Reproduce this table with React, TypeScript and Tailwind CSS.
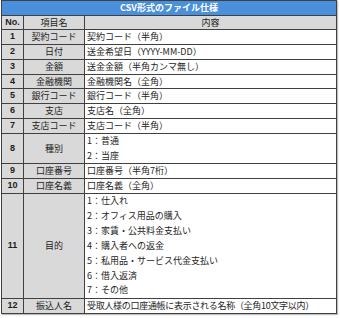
// CSV file spec table, Excel-style grid with a blue title bar and gray key columns.
type Row = { no: string; name: string; lines: string[]; tight?: boolean }

const ROWS: Row[] = [
  { no: '1', name: '契約コード', lines: ['契約コード（半角）'] },
  { no: '2', name: '日付', lines: ['送金希望日（YYYY-MM-DD）'] },
  { no: '3', name: '金額', lines: ['送金金額（半角カンマ無し）'] },
  { no: '4', name: '金融機関', lines: ['金融機関名（全角）'] },
  { no: '5', name: '銀行コード', lines: ['銀行コード（半角）'] },
  { no: '6', name: '支店', lines: ['支店名（全角）'] },
  { no: '7', name: '支店コード', lines: ['支店コード（半角）'] },
  { no: '8', name: '種別', lines: ['1：普通', '2：当座'] },
  { no: '9', name: '口座番号', lines: ['口座番号（半角7桁）'] },
  { no: '10', name: '口座名義', lines: ['口座名義（全角）'] },
  {
    no: '11',
    name: '目的',
    lines: [
      '1：仕入れ',
      '2：オフィス用品の購入',
      '3：家賃・公共料金支払い',
      '4：購入者への返金',
      '5：私用品・サービス代金支払い',
      '6：借入返済',
      '7：その他',
    ],
  },
  { no: '12', name: '振込人名', lines: ['受取人様の口座通帳に表示される名称（全角10文字以内）'], tight: true },
]

export default function App() {
  return (
    <div className="h-[318px] w-[340px] bg-white pl-px font-['Noto_Sans_CJK_JP',sans-serif] text-[9px] text-[#1e1e1e]">
      <div className="grid w-[336px] grid-cols-[21px_60px_251px] grid-rows-[14px_13px_14px_14px_14px_13px_14px_14px_14px_29px_14px_14px_104px_14px] gap-px bg-[#404040] p-px shadow-[1px_1px_1px_rgba(0,0,0,0.25)]">
        <div className="col-span-3 flex items-center justify-center bg-[#4a8fdb] font-bold text-white">
          CSV形式のファイル仕様
        </div>
        <div className="flex items-center justify-center bg-[#d9d9d9] font-['Liberation_Sans',sans-serif] font-bold">
          No.
        </div>
        <div className="flex items-center justify-center bg-[#d9d9d9]">項目名</div>
        <div className="flex items-center justify-center bg-[#d9d9d9]">内容</div>
        {ROWS.map((r) => (
          <Cells key={r.no} row={r} />
        ))}
      </div>
    </div>
  )
}

function Cells({ row }: { row: Row }) {
  return (
    <>
      <div className="flex items-center justify-center bg-[#d9d9d9] font-['Liberation_Sans',sans-serif] font-bold">
        {row.no}
      </div>
      <div className="flex items-center justify-center bg-[#d9d9d9]">{row.name}</div>
      <div className="flex flex-col justify-around bg-white pl-[2px]">
        {row.lines.map((l) => (
          <span
            key={l}
            className={row.tight ? 'whitespace-nowrap leading-[14px] tracking-[-0.3px]' : 'whitespace-nowrap leading-[14px]'}
          >
            {l}
          </span>
        ))}
      </div>
    </>
  )
}
